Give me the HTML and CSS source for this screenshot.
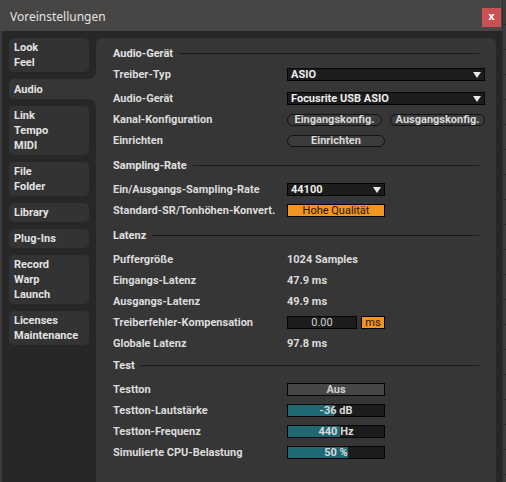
FILE: index.html
```html
<!DOCTYPE html>
<html lang="de">
<head>
    <meta charset="UTF-8">
    <title>Voreinstellungen</title>
    <link rel="stylesheet" href="styles.css">
</head>
<body>
    <div class="window">
        <div class="titlebar">
            <span class="title">Voreinstellungen</span>
            <button class="close">x</button>
        </div>

        <div class="frame">
            <nav class="tabs">
                <div class="tab"><span>Look</span><span>Feel</span></div>
                <div class="tab active"><span>Audio</span></div>
                <div class="tab"><span>Link</span><span>Tempo</span><span>MIDI</span></div>
                <div class="tab"><span>File</span><span>Folder</span></div>
                <div class="tab"><span>Library</span></div>
                <div class="tab"><span>Plug-Ins</span></div>
                <div class="tab"><span>Record</span><span>Warp</span><span>Launch</span></div>
                <div class="tab"><span>Licenses</span><span>Maintenance</span></div>
            </nav>

            <main class="panel">
                <!-- Audio-Gerät -->
                <section class="section first">
                    <div class="heading"><span>Audio-Gerät</span></div>
                    <div class="row">
                        <span class="label">Treiber-Typ</span>
                        <div class="select wide">ASIO
                            <svg class="arrow" viewBox="0 0 8 6" width="8" height="6"><polygon points="0,0 8,0 4,6" fill="#e8e8e8"/></svg>
                        </div>
                    </div>
                    <div class="row spaced">
                        <span class="label">Audio-Gerät</span>
                        <div class="select wide">Focusrite USB ASIO
                            <svg class="arrow" viewBox="0 0 8 6" width="8" height="6"><polygon points="0,0 8,0 4,6" fill="#e8e8e8"/></svg>
                        </div>
                    </div>
                    <div class="row">
                        <span class="label">Kanal-Konfiguration</span>
                        <div class="pair">
                            <button class="pill">Eingangskonfig.</button>
                            <button class="pill">Ausgangskonfig.</button>
                        </div>
                    </div>
                    <div class="row">
                        <span class="label">Einrichten</span>
                        <button class="pill single">Einrichten</button>
                    </div>
                </section>

                <!-- Sampling-Rate -->
                <section class="section">
                    <div class="heading"><span>Sampling-Rate</span></div>
                    <div class="row spaced">
                        <span class="label">Ein/Ausgangs-Sampling-Rate</span>
                        <div class="select">44100
                            <svg class="arrow" viewBox="0 0 8 6" width="8" height="6"><polygon points="0,0 8,0 4,6" fill="#e8e8e8"/></svg>
                        </div>
                    </div>
                    <div class="row">
                        <span class="label">Standard-SR/Tonhöhen-Konvert.</span>
                        <div class="box orange">Hohe Qualität</div>
                    </div>
                </section>

                <!-- Latenz -->
                <section class="section">
                    <div class="heading"><span>Latenz</span></div>
                    <div class="row spaced">
                        <span class="label">Puffergröße</span>
                        <span class="value">1024 Samples</span>
                    </div>
                    <div class="row">
                        <span class="label">Eingangs-Latenz</span>
                        <span class="value">47.9 ms</span>
                    </div>
                    <div class="row">
                        <span class="label">Ausgangs-Latenz</span>
                        <span class="value">49.9 ms</span>
                    </div>
                    <div class="row">
                        <span class="label">Treiberfehler-Kompensation</span>
                        <div class="pair tight">
                            <div class="box dark num">0.00</div>
                            <div class="box orange unit">ms</div>
                        </div>
                    </div>
                    <div class="row">
                        <span class="label">Globale Latenz</span>
                        <span class="value">97.8 ms</span>
                    </div>
                </section>

                <!-- Test -->
                <section class="section close-top">
                    <div class="heading"><span>Test</span></div>
                    <div class="row spaced">
                        <span class="label">Testton</span>
                        <div class="box toggle">Aus</div>
                    </div>
                    <div class="row">
                        <span class="label">Testton-Lautstärke</span>
                        <div class="box slider" style="--fill: 48%">-36 dB</div>
                    </div>
                    <div class="row">
                        <span class="label">Testton-Frequenz</span>
                        <div class="box slider" style="--fill: 54%">440 Hz</div>
                    </div>
                    <div class="row">
                        <span class="label">Simulierte CPU-Belastung</span>
                        <div class="box slider" style="--fill: 62%">50 %</div>
                    </div>
                </section>
            </main>
        </div>
    </div>
    <div class="desktop"></div>
</body>
</html>
```

FILE: styles.css
```css
body {
    margin: 0;
    width: 506px;
    height: 482px;
    overflow: hidden;
    display: flex;
    background: #3b3b3b;
    font-family: Roboto, "Liberation Sans", sans-serif;
    font-size: 11px;
    color: #dcdcdc;
}
.window {
    width: 502px;
    height: 482px;
    display: flex;
    flex-direction: column;
}
.titlebar {
    height: 31px;
    flex: none;
    display: flex;
    align-items: flex-start;
    justify-content: space-between;
    background: #474644;
}
.title {
    margin: 8px 0 0 10px;
    font-family: "Noto Sans", "Open Sans", sans-serif;
    font-size: 12px;
    color: #e4e4e4;
}
.close {
    margin: 8px 1px 0 0;
    width: 19px;
    height: 19px;
    padding: 0 0 2px;
    border: none;
    background: #c95151;
    color: #fff;
    font-family: "DejaVu Sans", sans-serif;
    font-size: 10px;
    font-weight: bold;
}
.frame {
    flex: 1;
    margin-left: 2px;
    padding: 7px 6px 0 7px;
    display: flex;
    gap: 7px;
    background: #272727;
    min-height: 0;
}

/* left navigation */
.tabs {
    width: 80px;
    flex: none;
    display: flex;
    flex-direction: column;
    gap: 7px;
}
.tab {
    position: relative;
    display: flex;
    flex-direction: column;
    padding: 2px 5px 2px;
    background: #333;
    border-radius: 5px;
    font-weight: bold;
    line-height: 15px;
    color: #e2e2e2;
}
.tab.active {
    margin-right: -7px;
    padding-top: 3px;
    padding-bottom: 2px;
    background: #363636;
    border-radius: 5px 0 0 5px;
}
.tab.active::before,
.tab.active::after {
    content: "";
    position: absolute;
    right: 0;
    width: 7px;
    height: 7px;
}
.tab.active::before {
    top: -7px;
    background: radial-gradient(circle at 0 0, transparent 6.5px, #363636 7px);
}
.tab.active::after {
    bottom: -7px;
    background: radial-gradient(circle at 0 100%, transparent 6.5px, #363636 7px);
}

/* main panel */
.panel {
    flex: 1;
    padding: 5px 11px 0 17px;
    background: #363636;
    border-radius: 6px 6px 0 0;
}
.section {
    margin-top: 4px;
}
.section.first {
    margin-top: 0;
}
.section.close-top {
    margin-top: 1px;
}
.heading {
    height: 21px;
    display: flex;
    align-items: center;
    gap: 6px;
    margin-right: 6px;
    font-weight: bold;
    color: #e2e2e2;
}
.heading::after {
    content: "";
    flex: 1;
    height: 1px;
    background: #1b1b1b;
}
.row {
    height: 21px;
    display: flex;
    align-items: center;
}
.row.spaced {
    margin-top: 3px;
}
.section.first .heading + .row {
    margin-top: 0;
}
.label {
    width: 174px;
    flex: none;
    font-weight: bold;
    color: #dcdcdc;
}
.value {
    font-weight: bold;
    color: #dcdcdc;
}

/* controls */
.select {
    position: relative;
    width: 98px;
    height: 13px;
    box-sizing: border-box;
    padding-left: 3px;
    display: flex;
    align-items: center;
    background: #1c1c1c;
    border: 1px solid #050505;
    font-weight: bold;
    color: #ececec;
}
.select.wide {
    width: 198px;
}
.arrow {
    position: absolute;
    right: 3px;
    top: 3px;
}
.pair {
    display: flex;
    gap: 8px;
}
.pair.tight {
    gap: 4px;
}
.pill {
    width: 95px;
    height: 12px;
    padding: 0;
    box-sizing: border-box;
    border: 1px solid #121212;
    border-radius: 6px;
    background: #3c3c3c;
    font-family: inherit;
    font-size: 11px;
    font-weight: bold;
    line-height: 10px;
    color: #d8d8d8;
}
.pill.single {
    width: 98px;
}
.box {
    width: 98px;
    height: 13px;
    box-sizing: border-box;
    display: flex;
    align-items: center;
    justify-content: center;
    border: 1px solid #050505;
}
.orange {
    background: #f0951f;
    color: #231400;
}
.dark {
    background: #1c1c1c;
    color: #cfcfcf;
}
.num {
    width: 70px;
}
.unit {
    width: 24px;
}
.toggle {
    background: #464646;
    color: #d0d0d0;
    font-weight: bold;
}
.slider {
    background: linear-gradient(to right, #1f6975 var(--fill), #1c1c1c var(--fill));
    color: #dadada;
    font-weight: bold;
}

.desktop {
    flex: 1;
    background: repeating-linear-gradient(to bottom, #3d3d3d 0 24px, #2a2a2a 24px 25px);
    border-left: 1px solid #303030;
}
```
